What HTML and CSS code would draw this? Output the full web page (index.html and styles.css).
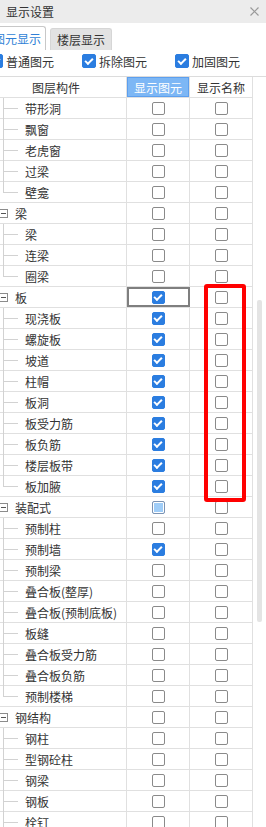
FILE: index.html
```html
<!doctype html>
<html lang="zh-CN">
<head>
<meta charset="utf-8">
<title>显示设置</title>
<link rel="stylesheet" href="styles.css">
</head>
<body>

	<div class="titlebar">
		<span>显示设置</span>
		<svg class="close" width="9" height="9" viewBox="0 0 9 9"><path d="M0.5 0.5 L8.5 8.5 M8.5 0.5 L0.5 8.5" stroke="#9a9a9a" stroke-width="1.2" fill="none"/></svg>
	</div>

	<div class="tabs">
		<div class="tab active">图元显示</div>
		<div class="tab">楼层显示</div>
	</div>

	<div class="filters">
		<label class="opt"><i class="cb big on"></i>普通图元</label>
		<label class="opt"><i class="cb big on"></i>拆除图元</label>
		<label class="opt"><i class="cb big on"></i>加固图元</label>
	</div>

	<div class="thead">
		<div class="name head">图层构件</div>
		<div class="cell sel-head">显示图元</div>
		<div class="cell">显示名称</div>
	</div>

	<div class="list">

		<div class="rows">

			<div class="row"><div class="name"><i class="tree"></i>带形洞</div><div class="cell"><i class="cb"></i></div><div class="cell"><i class="cb"></i></div></div>
			<div class="row"><div class="name"><i class="tree"></i>飘窗</div><div class="cell"><i class="cb"></i></div><div class="cell"><i class="cb"></i></div></div>
			<div class="row"><div class="name"><i class="tree"></i>老虎窗</div><div class="cell"><i class="cb"></i></div><div class="cell"><i class="cb"></i></div></div>
			<div class="row"><div class="name"><i class="tree"></i>过梁</div><div class="cell"><i class="cb"></i></div><div class="cell"><i class="cb"></i></div></div>
			<div class="row"><div class="name"><i class="tree last"></i>壁龛</div><div class="cell"><i class="cb"></i></div><div class="cell"><i class="cb"></i></div></div>

			<div class="row"><div class="name"><i class="fold"></i>梁</div><div class="cell"><i class="cb"></i></div><div class="cell"><i class="cb"></i></div></div>
			<div class="row"><div class="name"><i class="tree"></i>梁</div><div class="cell"><i class="cb"></i></div><div class="cell"><i class="cb"></i></div></div>
			<div class="row"><div class="name"><i class="tree"></i>连梁</div><div class="cell"><i class="cb"></i></div><div class="cell"><i class="cb"></i></div></div>
			<div class="row"><div class="name"><i class="tree last"></i>圈梁</div><div class="cell"><i class="cb"></i></div><div class="cell"><i class="cb"></i></div></div>

			<div class="row"><div class="name"><i class="fold"></i>板</div><div class="cell current"><i class="cb on"></i></div><div class="cell"><i class="cb"></i></div></div>
			<div class="row"><div class="name"><i class="tree"></i>现浇板</div><div class="cell"><i class="cb on"></i></div><div class="cell"><i class="cb"></i></div></div>
			<div class="row"><div class="name"><i class="tree"></i>螺旋板</div><div class="cell"><i class="cb on"></i></div><div class="cell"><i class="cb"></i></div></div>
			<div class="row"><div class="name"><i class="tree"></i>坡道</div><div class="cell"><i class="cb on"></i></div><div class="cell"><i class="cb"></i></div></div>
			<div class="row"><div class="name"><i class="tree"></i>柱帽</div><div class="cell"><i class="cb on"></i></div><div class="cell"><i class="cb"></i></div></div>
			<div class="row"><div class="name"><i class="tree"></i>板洞</div><div class="cell"><i class="cb on"></i></div><div class="cell"><i class="cb"></i></div></div>
			<div class="row"><div class="name"><i class="tree"></i>板受力筋</div><div class="cell"><i class="cb on"></i></div><div class="cell"><i class="cb"></i></div></div>
			<div class="row"><div class="name"><i class="tree"></i>板负筋</div><div class="cell"><i class="cb on"></i></div><div class="cell"><i class="cb"></i></div></div>
			<div class="row"><div class="name"><i class="tree"></i>楼层板带</div><div class="cell"><i class="cb on"></i></div><div class="cell"><i class="cb"></i></div></div>
			<div class="row"><div class="name"><i class="tree last"></i>板加腋</div><div class="cell"><i class="cb on"></i></div><div class="cell"><i class="cb"></i></div></div>

			<div class="row"><div class="name"><i class="fold"></i>装配式</div><div class="cell"><i class="cb part"></i></div><div class="cell"><i class="cb"></i></div></div>
			<div class="row"><div class="name"><i class="tree"></i>预制柱</div><div class="cell"><i class="cb"></i></div><div class="cell"><i class="cb"></i></div></div>
			<div class="row"><div class="name"><i class="tree"></i>预制墙</div><div class="cell"><i class="cb on"></i></div><div class="cell"><i class="cb"></i></div></div>
			<div class="row"><div class="name"><i class="tree"></i>预制梁</div><div class="cell"><i class="cb"></i></div><div class="cell"><i class="cb"></i></div></div>
			<div class="row"><div class="name"><i class="tree"></i>叠合板(整厚)</div><div class="cell"><i class="cb"></i></div><div class="cell"><i class="cb"></i></div></div>
			<div class="row"><div class="name"><i class="tree"></i>叠合板(预制底板)</div><div class="cell"><i class="cb"></i></div><div class="cell"><i class="cb"></i></div></div>
			<div class="row"><div class="name"><i class="tree"></i>板缝</div><div class="cell"><i class="cb"></i></div><div class="cell"><i class="cb"></i></div></div>
			<div class="row"><div class="name"><i class="tree"></i>叠合板受力筋</div><div class="cell"><i class="cb"></i></div><div class="cell"><i class="cb"></i></div></div>
			<div class="row"><div class="name"><i class="tree"></i>叠合板负筋</div><div class="cell"><i class="cb"></i></div><div class="cell"><i class="cb"></i></div></div>
			<div class="row"><div class="name"><i class="tree last"></i>预制楼梯</div><div class="cell"><i class="cb"></i></div><div class="cell"><i class="cb"></i></div></div>

			<div class="row"><div class="name"><i class="fold"></i>钢结构</div><div class="cell"><i class="cb"></i></div><div class="cell"><i class="cb"></i></div></div>
			<div class="row"><div class="name"><i class="tree"></i>钢柱</div><div class="cell"><i class="cb"></i></div><div class="cell"><i class="cb"></i></div></div>
			<div class="row"><div class="name"><i class="tree"></i>型钢砼柱</div><div class="cell"><i class="cb"></i></div><div class="cell"><i class="cb"></i></div></div>
			<div class="row"><div class="name"><i class="tree"></i>钢梁</div><div class="cell"><i class="cb"></i></div><div class="cell"><i class="cb"></i></div></div>
			<div class="row"><div class="name"><i class="tree"></i>钢板</div><div class="cell"><i class="cb"></i></div><div class="cell"><i class="cb"></i></div></div>
			<div class="row"><div class="name"><i class="tree"></i>栓钉</div><div class="cell"><i class="cb"></i></div><div class="cell"><i class="cb"></i></div></div>

		</div>

		<div class="scroll"><div class="thumb"></div></div>

		<div class="mark"></div>

	</div>

</body>
</html>
```

FILE: styles.css
```css
/* display settings panel */

	html, body { margin: 0; height: 100%; background: #fff; }
	body { font: 12px "Noto Sans CJK SC", "Microsoft YaHei", sans-serif; color: #333; width: 266px; overflow: hidden; }

	.titlebar { height: 23px; background: #ececec; display: flex; align-items: center; justify-content: space-between; padding: 0 7px 0 6px; box-sizing: border-box; }
	.close { display: block; }

	.tabs { height: 27px; padding-top: 3px; box-sizing: border-box; display: flex; align-items: flex-end; gap: 4px; margin-left: -12px; }
	.tab { height: 22px; padding: 0 6px; display: flex; align-items: center; background: #e2e2e2; border: 1px solid #d6d6d6; border-bottom: none; border-radius: 3px 3px 0 0; box-sizing: border-box; }
	.tab.active { height: 24px; padding: 0 4px; background: #fff; border-color: #c8c8c8; color: #2f7fd6; }

	.filters { height: 27px; padding-bottom: 4px; box-sizing: border-box; border-bottom: 1px solid #dcdcdc; display: flex; align-items: center; gap: 28px; }
	.opt { display: flex; align-items: center; gap: 3px; }
	.opt:first-child { margin-left: -11px; }

	.cb { display: flex; align-items: center; justify-content: center; width: 13px; height: 13px; box-sizing: border-box; border: 1px solid #8a8a8a; border-radius: 2px; background: #fff; }
	.cb.big { width: 14px; height: 14px; }
	.cb.on { background: #2b7de0; border-color: #2b7de0; }
	.cb.on::after { content: ""; width: 6px; height: 3px; border-left: 2px solid #fff; border-bottom: 2px solid #fff; transform: translate( 0, -1px ) rotate( -45deg ); }
	.cb.part { border-color: #7b93b3; background: #9fcdf8; box-shadow: inset 0 0 0 1px #fff; }

	.thead, .row { display: flex; height: 21px; box-sizing: border-box; border-bottom: 1px solid #e0e0e0; }
	.thead { width: 253px; }
	.name { width: 127px; flex: none; box-sizing: border-box; border-right: 1px solid #e0e0e0; display: flex; align-items: center; white-space: nowrap; }
	.name.head { padding-left: 32px; }
	.cell { width: 63px; flex: none; box-sizing: border-box; border-right: 1px solid #e0e0e0; display: flex; align-items: center; justify-content: center; }
	.sel-head { background: #7db7f5; color: #fff; box-shadow: inset 0 0 0 1px #5d9fee; }
	.current { outline: 2px solid #7f7f7f; outline-offset: -2px; }

	.tree { flex: none; width: 25px; align-self: stretch; margin-bottom: -1px;
		background: linear-gradient( #d2d2d2, #d2d2d2 ) 3px 0 / 1px 100% no-repeat, linear-gradient( #d2d2d2, #d2d2d2 ) 3px 10px / 15px 1px no-repeat; }
	.tree.last { background: linear-gradient( #d2d2d2, #d2d2d2 ) 3px 0 / 1px 11px no-repeat, linear-gradient( #d2d2d2, #d2d2d2 ) 3px 10px / 15px 1px no-repeat; }

	.fold { flex: none; width: 9px; height: 9px; box-sizing: border-box; margin: 0 7px 0 -1px; border: 1px solid #8c8c8c; background: linear-gradient( #555, #555 ) center / 5px 1px no-repeat #fff; }

	.list { display: flex; position: relative; }
	.rows { width: 253px; flex: none; }
	.scroll { width: 13px; flex: none; }
	.thumb { width: 5px; height: 322px; margin: 202px 0 0 4px; background: #e4e4e4; border-radius: 2px; }

	.mark { position: absolute; left: 204px; top: 186px; width: 42px; height: 218px; box-sizing: border-box; border: 4px solid #ff0000; border-radius: 3px; }
```
